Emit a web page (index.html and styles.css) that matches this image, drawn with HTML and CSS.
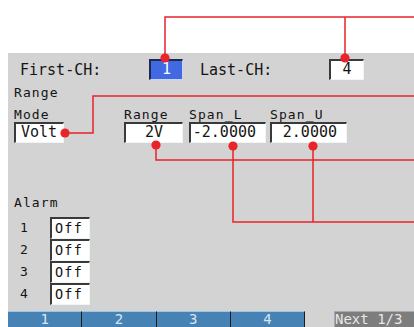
FILE: index.html
```html
<!DOCTYPE html>
<html>
<head>
<meta charset="utf-8">
<link rel="stylesheet" href="styles.css">
</head>
<body>
<div class="top"></div>
<div class="panel">
  <div class="chrow">
    <span class="biglabel first">First-CH:</span>
    <span class="field sel ch">1</span>
    <span class="biglabel last">Last-CH:</span>
    <span class="field ch">4</span>
  </div>
  <div class="label heading">Range</div>
  <div class="fields">
    <div class="col">
      <div class="label">Mode</div>
      <div class="field mode">Volt</div>
    </div>
    <div class="col c-range">
      <div class="label">Range</div>
      <div class="field range">2V</div>
    </div>
    <div class="col c-spanl">
      <div class="label">Span_L</div>
      <div class="field span">-2.0000</div>
    </div>
    <div class="col c-spanu">
      <div class="label">Span_U</div>
      <div class="field span">2.0000</div>
    </div>
  </div>
  <div class="label heading alarm">Alarm</div>
  <div class="alarms">
    <div class="arow"><span class="label num">1</span><span class="field off">Off</span></div>
    <div class="arow"><span class="label num">2</span><span class="field off">Off</span></div>
    <div class="arow"><span class="label num">3</span><span class="field off">Off</span></div>
    <div class="arow"><span class="label num">4</span><span class="field off">Off</span></div>
  </div>
  <div class="bar">
    <div class="btn">1</div>
    <div class="btn">2</div>
    <div class="btn">3</div>
    <div class="btn">4</div>
    <div class="gap"></div>
    <div class="next">Next 1/3</div>
  </div>
</div>
<svg class="wires" width="414" height="327" viewBox="0 0 414 327">
  <g fill="none" stroke="#e8232b" stroke-width="1.5">
    <path d="M165 58 V17 H414 M345 58 V17"/>
    <path d="M65 133 H93 V96 H414"/>
    <path d="M156 145 V160 H414"/>
    <path d="M233 146 V222 H414 M313 146 V222"/>
  </g>
  <g fill="#e8232b">
    <circle cx="165" cy="58" r="4.6"/>
    <circle cx="345" cy="58" r="4.6"/>
    <circle cx="65" cy="133" r="4.6"/>
    <circle cx="156" cy="145" r="4.6"/>
    <circle cx="233" cy="146" r="4.6"/>
    <circle cx="313" cy="146" r="4.6"/>
  </g>
</svg>
</body>
</html>
```
FILE: styles.css
```css
html, body {
  margin: 0;
  padding: 0;
}
body {
  width: 414px;
  height: 327px;
  overflow: hidden;
  position: relative;
  background: #ffffff;
  font-family: "DejaVu Sans Mono", monospace;
  color: #141414;
}
.top {
  height: 53px;
}
.panel {
  margin-left: 8px;
  height: 274px;
  background: #d3d3d3;
  display: flex;
  flex-direction: column;
}
.chrow {
  display: flex;
  align-items: center;
  margin-top: 6px;
  height: 21px;
  padding-left: 12px;
}
.biglabel {
  font-size: 15px;
  line-height: 16px;
}
.first {
  width: 129px;
}
.last {
  width: 129px;
  margin-left: 17px;
}
.field {
  box-sizing: border-box;
  height: 21px;
  background: #ffffff;
  border-top: 2px solid #3a3a3a;
  border-left: 2px solid #3a3a3a;
  border-right: 1px solid #eef6f6;
  border-bottom: 1px solid #eef6f6;
  font-size: 15px;
  line-height: 17px;
  white-space: nowrap;
  display: block;
}
.ch {
  width: 35px;
  text-align: center;
}
.sel {
  width: 34px;
  background: #4169e1;
  color: #ffffff;
  border-top-color: #1c2a4e;
  border-left-color: #1c2a4e;
  border-right-color: #c6d6f4;
  border-bottom-color: #c6d6f4;
}
.label {
  font-size: 13px;
  line-height: 14px;
  letter-spacing: 1.1px;
  white-space: nowrap;
}
.heading {
  margin-top: 6px;
  padding-left: 6px;
}
.fields {
  display: flex;
  margin-top: 8px;
  padding-left: 6px;
}
.col {
  display: flex;
  flex-direction: column;
}
.mode {
  width: 50px;
  padding-left: 5px;
}
.c-range {
  margin-left: 60px;
}
.range {
  width: 59px;
  text-align: center;
}
.c-spanl {
  margin-left: 6px;
}
.c-spanu {
  margin-left: 4px;
}
.span {
  width: 77px;
  text-align: right;
  padding-right: 9px;
}
.alarm {
  margin-top: 53px;
}
.alarms {
  display: flex;
  flex-direction: column;
  margin-top: 7px;
  padding-left: 12px;
}
.arow {
  display: flex;
  align-items: center;
  height: 22px;
}
.num {
  width: 30px;
}
.off {
  width: 40px;
  height: 22px;
  font-size: 13.5px;
  letter-spacing: 1.2px;
  line-height: 18px;
  padding-left: 3px;
}
.bar {
  margin-top: auto;
  height: 16px;
  display: flex;
  overflow: hidden;
}
.btn {
  box-sizing: border-box;
  width: 74.25px;
  background: #4682b4;
  border-top: 1px solid #9cc6e6;
  border-right: 1.5px solid #1b1b1b;
  color: #d6e6f2;
  text-align: center;
  font-size: 14px;
  line-height: 15px;
}
.gap {
  width: 29px;
}
.next {
  flex: 1;
  background: #7d7d7d;
  border-top: 1px solid #a8a8a8;
  border-left: 1px solid #a8a8a8;
  color: #e8e8e8;
  font-size: 14px;
  line-height: 15px;
  white-space: nowrap;
}
.wires {
  position: absolute;
  left: 0;
  top: 0;
  pointer-events: none;
}
```
